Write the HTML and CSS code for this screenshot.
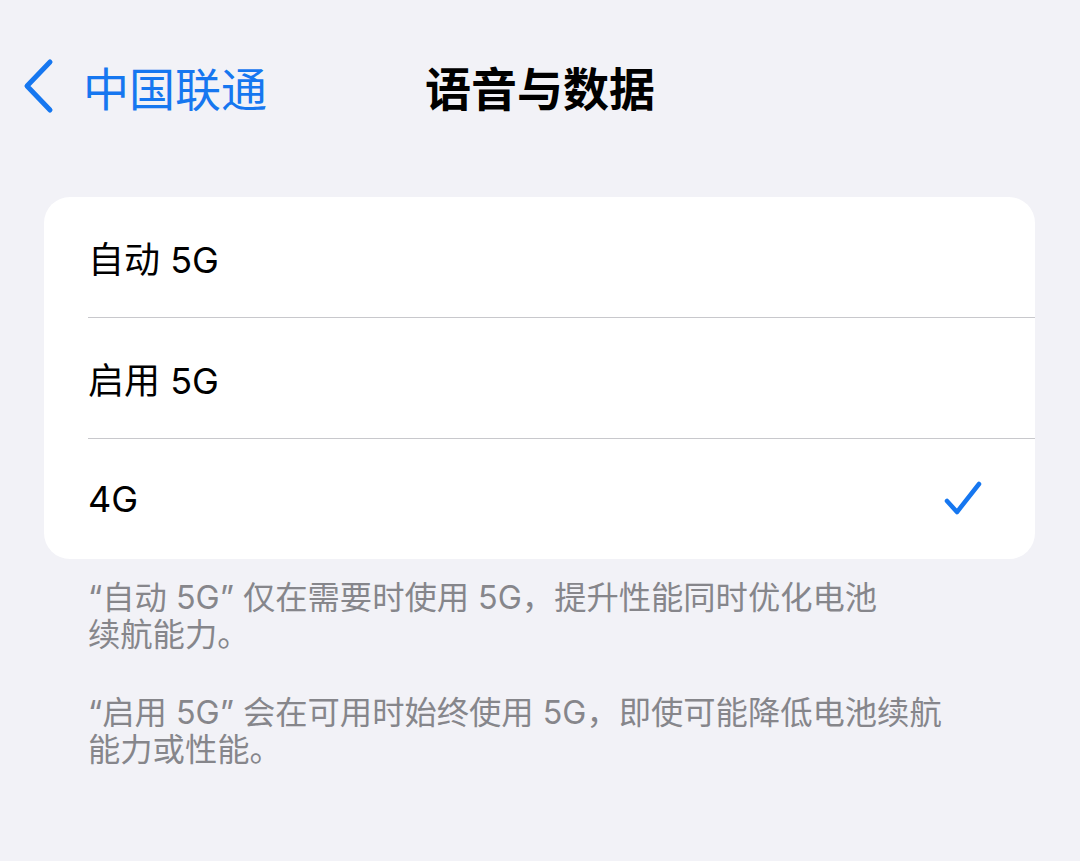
FILE: index.html
```html
<!DOCTYPE html>
<html lang="zh-CN">

<head>
    <meta charset="UTF-8">
    <meta name="viewport" content="width=device-width, initial-scale=1.0">
    <title>语音与数据</title>
    <link rel="stylesheet" href="styles.css">
</head>

<body>
    <header class="nav-bar">
        <a class="back-link" href="#">
            <svg class="chevron" width="34" height="56" viewBox="0 0 34 56">
                <path d="M28 4 L5 28 L28 52" fill="none" stroke="currentColor" stroke-width="5" stroke-linecap="round" stroke-linejoin="round" />
            </svg>
            <span>中国联通</span>
        </a>
        <h1 class="nav-title">语音与数据</h1>
        <div></div>
    </header>

    <ul class="option-list">
        <li class="option-row"><span class="option-label">自动 5G</span></li>
        <li class="option-row"><span class="option-label">启用 5G</span></li>
        <li class="option-row">
            <span class="option-label">4G</span>
            <svg class="checkmark" width="40" height="36" viewBox="0 0 40 36">
                <path d="M4 20 L14 31 L36 3" fill="none" stroke="currentColor" stroke-width="4.5" stroke-linecap="round" stroke-linejoin="round" />
            </svg>
        </li>
    </ul>

    <div class="footnotes">
        <p>“自动 5G” 仅在需要时使用 5G，提升性能同时优化电池<br>续航能力。</p>
        <p>“启用 5G” 会在可用时始终使用 5G，即使可能降低电池续航<br>能力或性能。</p>
    </div>
</body>

</html>
```

FILE: styles.css
```css
body {
    margin: 0;
    background-color: #f2f2f7;
    font-family: Inter, "Noto Sans CJK SC", sans-serif;
    color: #000000;
}

.nav-bar {
    display: grid;
    grid-template-columns: 1fr auto 1fr;
    align-items: center;
    height: 172px;
}

.back-link {
    display: flex;
    align-items: center;
    gap: 27px;
    padding-left: 22px;
    color: #1677f0;
    text-decoration: none;
    font-size: 46px;
}

.chevron {
    display: block;
}

.nav-title {
    margin: 0;
    font-size: 46px;
    font-weight: 700;
}

.option-list {
    list-style: none;
    margin: 25px 45px 0 44px;
    padding: 0 0 0 44px;
    background: #ffffff;
    border-radius: 26px;
}

.option-row {
    display: flex;
    align-items: center;
    justify-content: space-between;
    box-sizing: border-box;
    height: 121px;
    padding-right: 52px;
    border-bottom: 1px solid #c8c8cc;
    font-size: 36px;
}

.option-row:last-child {
    height: 120px;
    border-bottom: none;
}

.checkmark {
    color: #1677f0;
}

.footnotes {
    padding: 20px 60px 0 88px;
    color: #86868b;
    font-size: 32.3px;
    line-height: 37px;
}

.footnotes p {
    margin: 0 0 41px;
}
```
